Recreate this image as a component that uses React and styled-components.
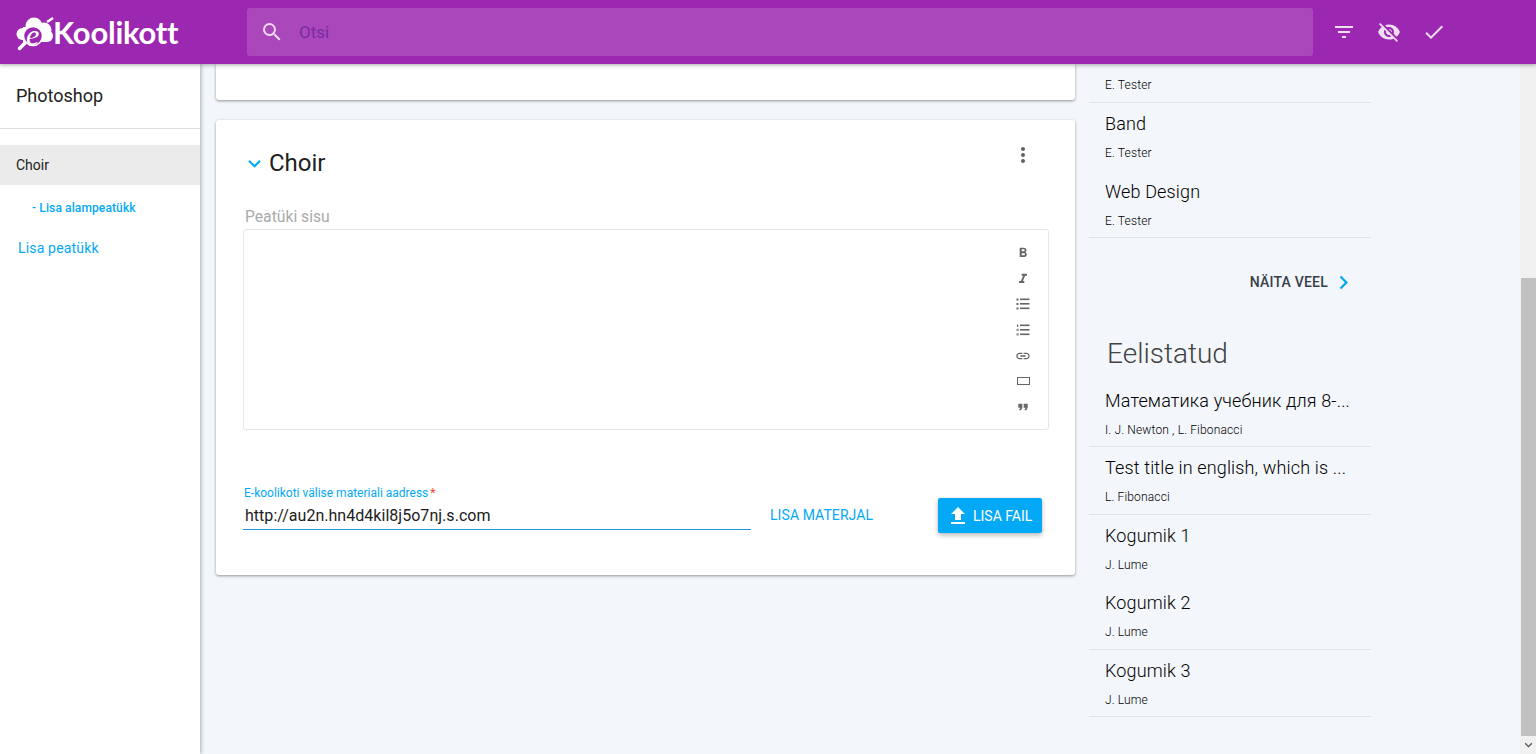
import { createGlobalStyle, styled } from 'styled-components';
import {
    MdCheck,
    MdChevronRight,
    MdExpandMore,
    MdFileUpload,
    MdFilterList,
    MdFormatBold,
    MdFormatItalic,
    MdFormatQuote,
    MdKeyboardArrowDown,
    MdLink,
    MdMoreVert,
    MdSearch,
    MdVisibilityOff,
} from 'react-icons/md';

const BLUE = '#03a9f4';

const GlobalStyle = createGlobalStyle`
    html, body {
        margin: 0;
        height: 100%;
        overflow: hidden;
        background: #f3f6fb;
        font-family: Roboto, "Liberation Sans", sans-serif;
        color: #212121;
    }
`;

const RectIcon = () => (
    <svg width='16' height='16' viewBox='0 0 16 16'>
        <rect x='2.5' y='4.5' width='12' height='7' fill='none' stroke='currentColor' />
    </svg>
);

const ListIcon = () => (
    <svg width='16' height='16' viewBox='0 0 16 16' fill='currentColor'>
        <rect x='1.5' y='2.5' width='2' height='2' />
        <rect x='1.5' y='7' width='2' height='2' />
        <rect x='1.5' y='11.5' width='2' height='2' />
        <rect x='5' y='2.5' width='9.5' height='1.6' />
        <rect x='5' y='7' width='9.5' height='1.6' />
        <rect x='5' y='11.5' width='9.5' height='1.6' />
    </svg>
);

const NumberedIcon = () => (
    <svg width='16' height='16' viewBox='0 0 16 16' fill='currentColor'>
        <rect x='2' y='2.5' width='1.2' height='2.4' />
        <rect x='1.5' y='6.8' width='2.2' height='2.2' opacity='0.7' />
        <rect x='1.5' y='11.2' width='2.2' height='2.4' opacity='0.7' />
        <rect x='5' y='2.5' width='9.5' height='1.6' />
        <rect x='5' y='7' width='9.5' height='1.6' />
        <rect x='5' y='11.5' width='9.5' height='1.6' />
    </svg>
);

const Logo = () => (
    <LogoLink>
        <svg width='46' height='38' viewBox='0 0 46 38'>
            <g fill='#fff'>
                <circle cx='6.5' cy='21' r='6' />
                <circle cx='18' cy='13' r='8.5' />
                <circle cx='28' cy='17' r='7.5' />
                <circle cx='31' cy='23' r='6' />
                <rect x='7' y='14' width='24' height='15' />
            </g>
            <path d='M31 9l6-4' stroke='#fff' strokeWidth='2.5' />
            <circle cx='17' cy='23' r='9.5' fill='#9c27b0' stroke='#fff' strokeWidth='1.5' />
            <path d='M9 30l-5.5 5.5' stroke='#fff' strokeWidth='3.5' strokeLinecap='round' />
            <text x='10' y='32' fontFamily='Liberation Serif' fontStyle='italic' fontSize='30' fill='#fff'>
                e
            </text>
        </svg>
        <LogoText>Koolikott</LogoText>
    </LogoLink>
);

const recent = [
    { title: 'Band', author: 'E. Tester' },
    { title: 'Web Design', author: 'E. Tester', line: true },
];

const favourites = [
    { title: 'Математика учебник для 8-...', author: 'I. J. Newton , L. Fibonacci', line: true },
    { title: 'Test title in english, which is ...', author: 'L. Fibonacci', line: true },
    { title: 'Kogumik 1', author: 'J. Lume' },
    { title: 'Kogumik 2', author: 'J. Lume', line: true },
    { title: 'Kogumik 3', author: 'J. Lume', line: true },
];

const BookRow = ({ title, author, line }) => (
    <Row $line={line}>
        <RowTitle>{title}</RowTitle>
        <RowAuthor>{author}</RowAuthor>
    </Row>
);

const App = () => {
    return (
        <Page>
            <GlobalStyle />
            <Header>
                <Logo />
                <Search>
                    <MdSearch size={24} />
                    <SearchText>Otsi</SearchText>
                </Search>
                <HeaderActions>
                    <HeaderButton>
                        <MdFilterList size={24} />
                    </HeaderButton>
                    <HeaderButton>
                        <MdVisibilityOff size={24} />
                    </HeaderButton>
                    <HeaderButton>
                        <MdCheck size={24} />
                    </HeaderButton>
                </HeaderActions>
            </Header>

            <Body>
                <Sidebar>
                    <SideTitle>Photoshop</SideTitle>
                    <SideActive>Choir</SideActive>
                    <SideSub>- Lisa alampeatükk</SideSub>
                    <SideAdd>Lisa peatükk</SideAdd>
                </Sidebar>

                <Main>
                    <CutCard />
                    <Card>
                        <ChapterHead>
                            <MdKeyboardArrowDown size={25} color={BLUE} />
                            <ChapterTitle>Choir</ChapterTitle>
                            <MoreButton>
                                <MdMoreVert size={24} />
                            </MoreButton>
                        </ChapterHead>
                        <EditorLabel>Peatüki sisu</EditorLabel>
                        <Editor>
                            <EditorTools>
                                <MdFormatBold size={16} />
                                <MdFormatItalic size={16} />
                                <ListIcon />
                                <NumberedIcon />
                                <MdLink size={16} />
                                <RectIcon />
                                <MdFormatQuote size={16} />
                            </EditorTools>
                        </Editor>
                        <LinkRow>
                            <Field>
                                <FieldLabel>
                                    E-koolikoti välise materiali aadress<Star>*</Star>
                                </FieldLabel>
                                <FieldValue>http://au2n.hn4d4kil8j5o7nj.s.com</FieldValue>
                            </Field>
                            <TextButton>LISA MATERJAL</TextButton>
                            <UploadButton>
                                <MdFileUpload size={24} />
                                LISA FAIL
                            </UploadButton>
                        </LinkRow>
                    </Card>
                </Main>

                <Aside>
                    <CutRow>
                        <RowAuthor>E. Tester</RowAuthor>
                    </CutRow>
                    {recent.map((item) => (
                        <BookRow key={item.title} {...item} />
                    ))}
                    <MoreRow>
                        NÄITA VEEL
                        <MdChevronRight size={27} color={BLUE} />
                    </MoreRow>
                    <AsideTitle>Eelistatud</AsideTitle>
                    {favourites.map((item) => (
                        <BookRow key={item.title} {...item} />
                    ))}
                </Aside>

                <Scrollbar>
                    <Thumb />
                    <ArrowDown>
                        <MdExpandMore size={16} />
                    </ArrowDown>
                </Scrollbar>
            </Body>
        </Page>
    );
};

const Page = styled.div`
    display: flex;
    flex-direction: column;
    height: 754px;
    overflow: hidden;
`;

const Header = styled.header`
    position: relative;
    z-index: 3;
    flex: none;
    display: flex;
    align-items: center;
    height: 64px;
    padding-left: 16px;
    background: #9c27b0;
    box-shadow: 0 1px 4px rgba(0, 0, 0, 0.35);
`;

const LogoLink = styled.a`
    display: flex;
    align-items: center;
    width: 231px;
    flex: none;
    color: #fff;
`;

const LogoText = styled.span`
    margin-left: -9px;
    font-family: Lato, sans-serif;
    font-size: 31px;
    font-weight: 700;
    line-height: 38px;
    letter-spacing: -0.25px;
`;

const Search = styled.div`
    display: flex;
    align-items: center;
    gap: 15px;
    width: 1066px;
    height: 48px;
    padding-left: 13px;
    box-sizing: border-box;
    flex: none;
    border-radius: 3px;
    background: rgba(255, 255, 255, 0.15);
    color: rgba(255, 255, 255, 0.8);
`;

const SearchText = styled.span`
    font-size: 17px;
    color: rgba(74, 20, 140, 0.55);
`;

const HeaderActions = styled.div`
    display: flex;
    margin-left: 8px;
`;

const HeaderButton = styled.div`
    display: flex;
    align-items: center;
    justify-content: center;
    width: 45px;
    height: 48px;
    color: rgba(255, 255, 255, 0.85);
`;

const Body = styled.div`
    flex: 1;
    display: flex;
    min-height: 0;
`;

const Sidebar = styled.nav`
    position: relative;
    z-index: 2;
    flex: none;
    width: 200px;
    background: #fff;
    box-shadow: 1px 0 4px rgba(0, 0, 0, 0.3);
`;

const SideTitle = styled.div`
    height: 65px;
    padding-left: 16px;
    box-sizing: border-box;
    border-bottom: 1px solid #e0e0e0;
    font-size: 18px;
    line-height: 64px;
    margin-bottom: 16px;
`;

const SideActive = styled.div`
    height: 40px;
    padding-left: 16px;
    background: #ebebeb;
    font-size: 14px;
    line-height: 40px;
`;

const SideSub = styled.div`
    padding-left: 32px;
    margin-top: 15px;
    font-size: 12px;
    font-weight: 500;
    line-height: 16px;
    letter-spacing: 0.12px;
    color: ${BLUE};
`;

const SideAdd = styled.div`
    padding-left: 18px;
    margin-top: 24px;
    font-size: 14px;
    line-height: 16px;
    letter-spacing: 0.17px;
    color: ${BLUE};
`;

const Main = styled.main`
    flex: none;
    width: 859px;
    margin-left: 16px;
`;

const CutCard = styled.div`
    height: 36px;
    margin-bottom: 20px;
    border-radius: 0 0 3px 3px;
    background: #fff;
    box-shadow: 0 1px 3px rgba(0, 0, 0, 0.4);
`;

const Card = styled.section`
    height: 455px;
    padding: 0 26px 0 27px;
    box-sizing: border-box;
    border-radius: 3px;
    background: #fff;
    box-shadow: 0 1px 3px rgba(0, 0, 0, 0.4);
`;

const ChapterHead = styled.div`
    display: flex;
    align-items: center;
    height: 84px;
    box-sizing: border-box;
    padding-top: 2px;
    margin-left: -1px;
`;

const ChapterTitle = styled.h2`
    margin: 0 0 0 2px;
    font-size: 24px;
    font-weight: 400;
`;

const MoreButton = styled.div`
    display: flex;
    margin: -16px 14px 0 auto;
    color: #616161;
`;

const EditorLabel = styled.div`
    height: 25px;
    margin-left: 2px;
    font-size: 15.7px;
    line-height: 26px;
    color: #aaa;
`;

const Editor = styled.div`
    display: flex;
    justify-content: flex-end;
    height: 201px;
    box-sizing: border-box;
    border: 1px solid #e6e6e6;
    border-radius: 3px;
`;

const EditorTools = styled.div`
    display: flex;
    flex-direction: column;
    gap: 9.67px;
    padding: 15px 17px 0 0;
    color: #666;
`;

const LinkRow = styled.div`
    display: flex;
    align-items: flex-end;
    margin-top: 56px;
`;

const Field = styled.div`
    width: 508px;
    height: 44px;
    box-sizing: border-box;
    border-bottom: 1px solid #2196e0;
`;

const FieldLabel = styled.label`
    display: block;
    margin-left: 1px;
    font-size: 12px;
    line-height: 14px;
    color: ${BLUE};
`;

const Star = styled.span`
    margin-left: 2px;
    color: #f44336;
`;

const FieldValue = styled.div`
    margin: 6px 0 0 2px;
    font-size: 16px;
    line-height: 20px;
    letter-spacing: 0.03px;
`;

const TextButton = styled.div`
    align-self: flex-end;
    margin: 0 0 7px 19px;
    font-size: 14px;
    line-height: 16px;
    letter-spacing: 0.08px;
    color: ${BLUE};
`;

const UploadButton = styled.div`
    display: flex;
    align-items: center;
    gap: 3px;
    height: 35px;
    width: 104px;
    box-sizing: border-box;
    padding-left: 8px;
    margin: 0 7px -3px auto;
    border-radius: 2px;
    background: ${BLUE};
    box-shadow: 0 2px 5px rgba(0, 0, 0, 0.3);
    font-size: 14px;
    color: #fff;
`;

const Aside = styled.aside`
    flex: none;
    width: 282px;
    margin-left: 14px;
`;

const CutRow = styled.div`
    height: 39px;
    padding: 14px 16px 0;
    box-sizing: border-box;
    border-bottom: 1px solid #dfe3e8;
`;

const Row = styled.div`
    height: 67.5px;
    box-sizing: border-box;
    padding: 10px 16px 0;
    border-bottom: 1px solid ${(props) => (props.$line ? '#dfe3e8' : 'transparent')};
`;

const RowTitle = styled.div`
    font-size: 18px;
    font-weight: 300;
    line-height: 22px;
    letter-spacing: 0.15px;
    white-space: nowrap;
    color: #000;
`;

const RowAuthor = styled.div`
    margin-top: 11px;
    font-size: 12px;
    font-weight: 300;
    line-height: 14px;
    letter-spacing: 0.15px;
    color: #000;

    ${CutRow} & {
        margin-top: 0;
    }
`;

const MoreRow = styled.div`
    display: flex;
    align-items: center;
    justify-content: flex-end;
    gap: 2px;
    height: 24px;
    margin-top: 32px;
    padding-right: 14px;
    font-size: 14px;
    font-weight: 500;
    letter-spacing: 0.2px;
    color: #37404a;
`;

const AsideTitle = styled.h3`
    margin: 42px 0 7.5px 18px;
    font-size: 28px;
    font-weight: 300;
    line-height: 36px;
    color: #424242;
`;

const Scrollbar = styled.div`
    flex: none;
    display: flex;
    flex-direction: column;
    width: 15px;
    margin-left: auto;
    padding-left: 1px;
    background: #f1f1f1;
`;

const Thumb = styled.div`
    flex: none;
    height: 458px;
    margin-top: 214px;
    background: #c1c1c1;
`;

const ArrowDown = styled.div`
    display: flex;
    align-items: center;
    justify-content: center;
    height: 18px;
    color: #505050;
`;

export default App;
